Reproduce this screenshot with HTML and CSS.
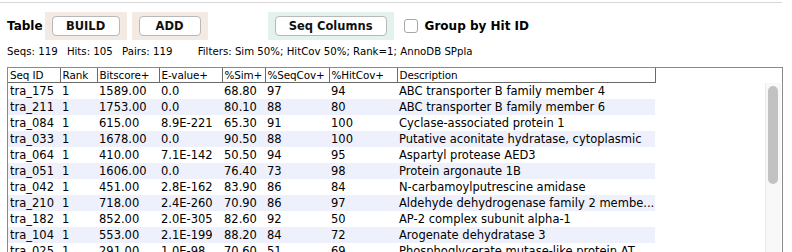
FILE: index.html
```
<!DOCTYPE html>
<html>
<head>
    <title>Hit Table</title>
    <link rel="stylesheet" href="styles.css">
</head>
<body>
    <div class="topline"></div>

    <div class="toolbar">
        <span class="label">Table</span>
        <div class="panel beige"><button>BUILD</button></div>
        <div class="panel beige"><button>ADD</button></div>
        <div class="panel green wide"><button>Seq Columns</button></div>
        <label class="check"><span class="box"></span>Group by Hit ID</label>
    </div>

    <div class="stats">
        <span>Seqs: 119</span>
        <span>Hits: 105</span>
        <span>Pairs: 119</span>
        <span class="filters">Filters: Sim 50%; HitCov 50%; Rank=1; AnnoDB SPpla</span>
    </div>

    <div class="table-wrap">
        <div class="table-area">
            <table class="hits">
                <colgroup>
                    <col style="width:52px">
                    <col style="width:37px">
                    <col style="width:62px">
                    <col style="width:63px">
                    <col style="width:43px">
                    <col style="width:64px">
                    <col style="width:68px">
                    <col style="width:258px">
                </colgroup>
                <thead>
                    <tr>
                        <th>Seq ID</th>
                        <th>Rank</th>
                        <th>Bitscore+</th>
                        <th>E-value+</th>
                        <th>%Sim+</th>
                        <th>%SeqCov+</th>
                        <th>%HitCov+</th>
                        <th>Description</th>
                    </tr>
                </thead>
                <tbody id="rows"></tbody>
            </table>
        </div>
        <div class="scrollbar">
            <div class="thumb"></div>
        </div>
    </div>

    <script>
        // rows copied from the hit list
        const rows = [
            ['tra_175', '1', '1589.00', '0.0', '68.80', '97', '94', 'ABC transporter B family member 4'],
            ['tra_211', '1', '1753.00', '0.0', '80.10', '88', '80', 'ABC transporter B family member 6'],
            ['tra_084', '1', '615.00', '8.9E-221', '65.30', '91', '100', 'Cyclase-associated protein 1'],
            ['tra_033', '1', '1678.00', '0.0', '90.50', '88', '100', 'Putative aconitate hydratase, cytoplasmic'],
            ['tra_064', '1', '410.00', '7.1E-142', '50.50', '94', '95', 'Aspartyl protease AED3'],
            ['tra_051', '1', '1606.00', '0.0', '76.40', '73', '98', 'Protein argonaute 1B'],
            ['tra_042', '1', '451.00', '2.8E-162', '83.90', '86', '84', 'N-carbamoylputrescine amidase'],
            ['tra_210', '1', '718.00', '2.4E-260', '70.90', '86', '97', 'Aldehyde dehydrogenase family 2 membe...'],
            ['tra_182', '1', '852.00', '2.0E-305', '82.60', '92', '50', 'AP-2 complex subunit alpha-1'],
            ['tra_104', '1', '553.00', '2.1E-199', '88.20', '84', '72', 'Arogenate dehydratase 3'],
            ['tra_025', '1', '291.00', '1.0E-98', '70.60', '51', '69', 'Phosphoglycerate mutase-like protein AT']
        ];

        const body = document.getElementById('rows');
        rows.forEach(r => {
            const tr = document.createElement('tr');
            tr.innerHTML = r.map(c => `<td>${c}</td>`).join('');
            body.appendChild(tr);
        });
    </script>
</body>
</html>
```

FILE: styles.css
```
body {
    margin: 0;
    font-family: "DejaVu Sans", sans-serif;
    color: #000;
    background: #fff;
    height: 252px;
    overflow: hidden;
}

.topline {
    margin: 2px 10px 0 0;
    border-top: 1px solid #d6d6d6;
}

.toolbar {
    display: flex;
    align-items: center;
    margin-top: 9px;
    padding-left: 7px;
    height: 28px;
}

.label {
    font-weight: bold;
    font-size: 12px;
    margin-right: 2px;
}

.panel {
    height: 28px;
    display: flex;
    align-items: center;
    justify-content: center;
    padding: 0 7px;
    margin-right: 5px;
}

.beige {
    background: #f3eae3;
}

.green {
    background: #e3f3ec;
    margin-left: 55px;
    margin-right: 10px;
}

.panel button {
    font-family: inherit;
    font-weight: bold;
    font-size: 11.5px;
    background: #fff;
    border: 1px solid #b8b8b8;
    border-radius: 4px;
    height: 20px;
    padding: 0;
    width: 68px;
    color: #111;
}

.beige + .beige button {
    width: 62px;
}

.wide button {
    width: 112px;
}

.check {
    display: flex;
    align-items: center;
    font-weight: bold;
    font-size: 12px;
}

.box {
    width: 12px;
    height: 12px;
    border: 1px solid #a8a8a8;
    border-radius: 3px;
    margin-right: 7px;
    background: #fff;
}

.stats {
    font-size: 10.2px;
    padding-left: 7px;
    margin-top: 5px;
    height: 13px;
    line-height: 13px;
    white-space: nowrap;
}

.stats span {
    margin-right: 6px;
}

.stats .filters {
    margin-left: 16px;
}

.table-wrap {
    display: flex;
    margin: 9px 9px 0 7px;
    border: 1px solid #8a8a8a;
    height: 200px;
}

.table-area {
    flex: 1;
}

.hits {
    border-collapse: collapse;
    table-layout: fixed;
    width: 647px;
    font-size: 11.5px;
}

.hits th {
    font-weight: normal;
    text-align: left;
    font-size: 10.4px;
    letter-spacing: -0.1px;
    height: 14px;
    padding: 0 2px;
    border-right: 1px solid #6a6a6a;
    border-bottom: 1px solid #6a6a6a;
    white-space: nowrap;
    overflow: hidden;
}

.hits td {
    height: 16px;
    padding: 0 2px;
    white-space: nowrap;
    overflow: hidden;
}

.hits tbody tr:nth-child(even) td {
    background: #eef1fb;
}

.scrollbar {
    width: 15px;
    margin: 15px 1px 0 0;
    background: #f8f8f8;
    border-left: 1px solid #ececec;
    position: relative;
}

.thumb {
    position: absolute;
    top: 3px;
    left: 2px;
    width: 10px;
    height: 98px;
    border-radius: 5px;
    background: #c2c2c2;
}
```
